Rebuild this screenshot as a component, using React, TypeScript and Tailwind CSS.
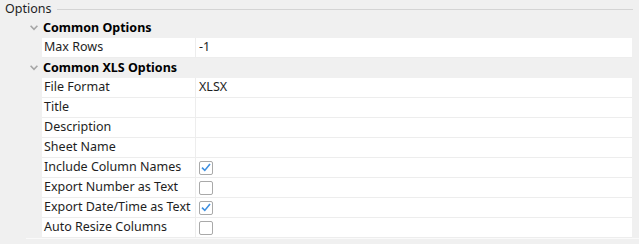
import React from 'react';

type Row = { label: string; value?: string; check?: boolean };

const groups: { title: string; rows: Row[] }[] = [
  { title: 'Common Options', rows: [{ label: 'Max Rows', value: '-1' }] },
  {
    title: 'Common XLS Options',
    rows: [
      { label: 'File Format', value: 'XLSX' },
      { label: 'Title' },
      { label: 'Description' },
      { label: 'Sheet Name' },
      { label: 'Include Column Names', check: true },
      { label: 'Export Number as Text', check: false },
      { label: 'Export Date/Time as Text', check: true },
      { label: 'Auto Resize Columns', check: false },
    ],
  },
];

const Chevron = () => (
  <svg width="8" height="6" viewBox="0 0 8 6" className="mr-[5px]">
    <path d="M0.6 0.8 L4 4.4 L7.4 0.8" fill="none" stroke="#a6a6a6" strokeWidth="1.6" />
  </svg>
);

const CheckBox = ({ checked }: { checked: boolean }) => (
  <div className="w-[14px] h-[14px] rounded-[2px] border border-[#a9a9a9] bg-white flex items-center justify-center">
    {checked && (
      <svg width="10" height="9" viewBox="0 0 10 9">
        <path d="M1 4.6 L3.8 7.4 L9 1" fill="none" stroke="#3d8fe0" strokeWidth="1.6" />
      </svg>
    )}
  </div>
);

export default function App() {
  return (
    <div className="w-[639px] h-[244px] bg-[#f0f0f0] text-[12.5px] text-[#1e1e1e] overflow-hidden" style={{ fontFamily: '"Noto Sans", "Liberation Sans", sans-serif' }}>
      <div className="flex items-center h-[18px] pl-[5px] pr-[6px] pt-[1px]">
        <span className="leading-none pb-[1px]">Options</span>
        <div className="flex-1 h-px bg-[#d4d4d4] ml-[6px]" />
      </div>
      <div className="ml-[26px] border-b border-[#fafafa] pr-[7px]">
        {groups.map((g) => (
          <div key={g.title}>
            <div className="flex items-center h-[20px] pl-[4px] font-bold text-black">
              <Chevron />
              <span>{g.title}</span>
            </div>
            {g.rows.map((r) => (
              <div key={r.label} className="ml-[16px] flex h-[20px] bg-white border-b border-[#ededed]">
                <div className="w-[154px] border-r border-[#ededed] pl-[2px] flex items-center">{r.label}</div>
                <div className="flex-1 pl-[3px] flex items-center">
                  {r.check !== undefined ? <CheckBox checked={r.check} /> : r.value}
                </div>
              </div>
            ))}
          </div>
        ))}
      </div>
    </div>
  );
}
